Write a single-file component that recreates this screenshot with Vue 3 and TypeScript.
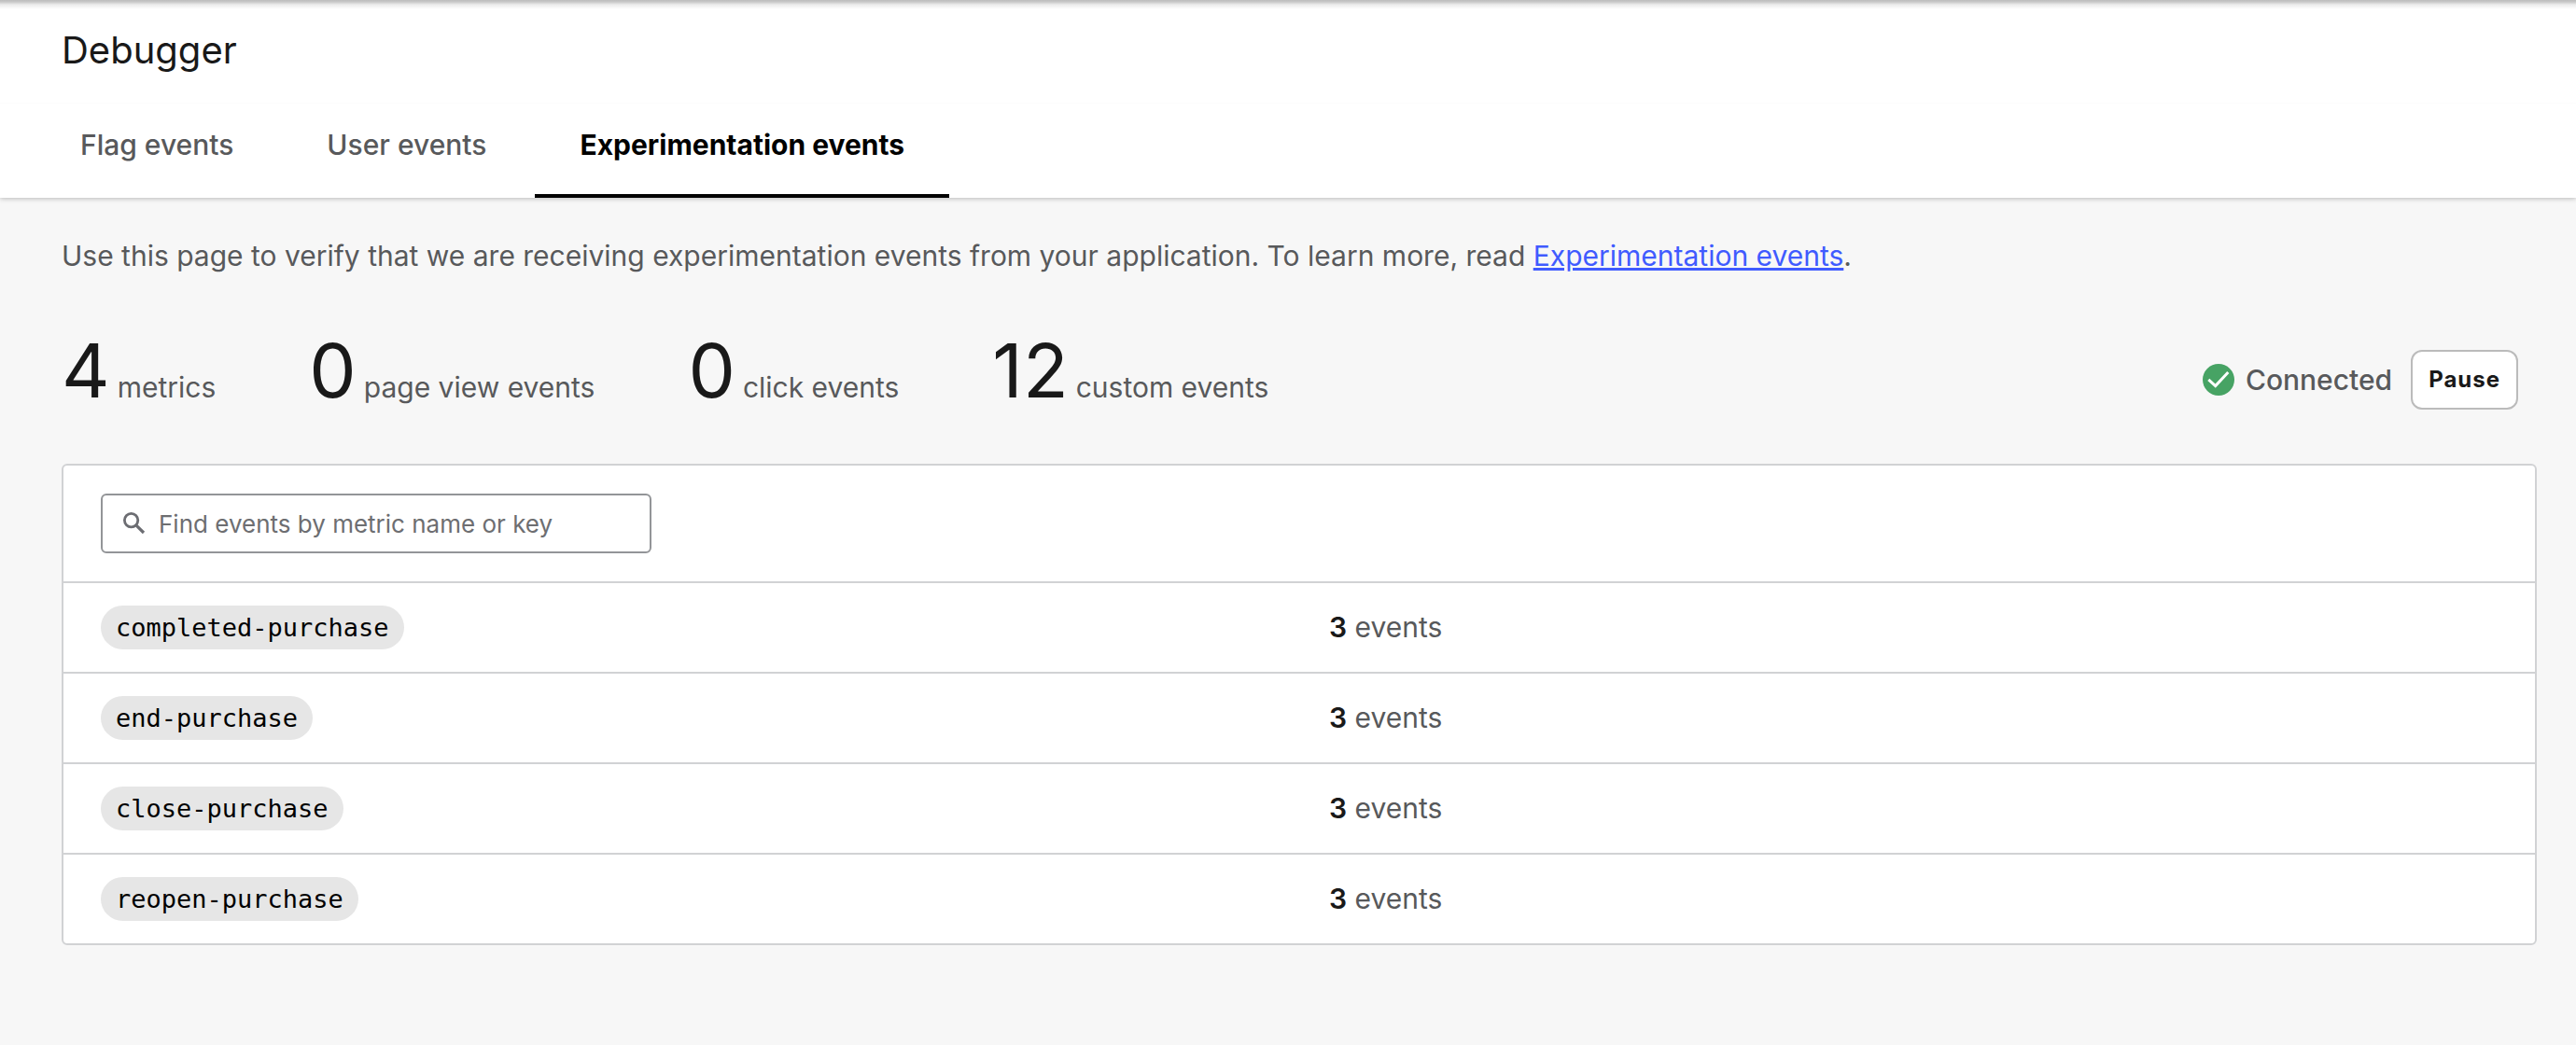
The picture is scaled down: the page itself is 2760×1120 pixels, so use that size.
<script setup lang="ts">
import { computed, ref } from 'vue'

interface Tab { id: string; label: string }
interface Stat { value: number; label: string }
interface Metric { key: string; events: number }

const tabs: Tab[] = [
  { id: 'flag', label: 'Flag events' },
  { id: 'user', label: 'User events' },
  { id: 'experimentation', label: 'Experimentation events' },
]
const activeTab = ref('experimentation')

const stats: Stat[] = [
  { value: 4, label: 'metrics' },
  { value: 0, label: 'page view events' },
  { value: 0, label: 'click events' },
  { value: 12, label: 'custom events' },
]

const metrics: Metric[] = [
  { key: 'completed-purchase', events: 3 },
  { key: 'end-purchase', events: 3 },
  { key: 'close-purchase', events: 3 },
  { key: 'reopen-purchase', events: 3 },
]

const query = ref('')
const visibleMetrics = computed(() =>
  metrics.filter((m) => m.key.includes(query.value.trim().toLowerCase())),
)
</script>

<template>
  <div class="page">
    <header class="header">
      <h1 class="title">Debugger</h1>
      <nav class="tabs" aria-label="Debugger views">
        <a
          v-for="tab in tabs"
          :key="tab.id"
          href="#"
          class="tab"
          :class="{ active: tab.id === activeTab }"
          :aria-current="tab.id === activeTab ? 'page' : undefined"
          @click.prevent="activeTab = tab.id"
        >{{ tab.label }}</a>
      </nav>
    </header>

    <main class="content">
      <p class="intro">
        Use this page to verify that we are receiving experimentation events from your application. To learn more, read
        <a href="#" class="link">Experimentation events</a>.
      </p>

      <div class="summary">
        <ul class="stats">
          <li v-for="stat in stats" :key="stat.label" class="stat">
            <span class="value">{{ stat.value }}</span>
            <span>{{ stat.label }}</span>
          </li>
        </ul>
        <div class="status">
          <svg class="check" viewBox="0 0 34 34" aria-hidden="true">
            <circle cx="17" cy="17" r="17" fill="#47a364" />
            <path d="M6.3 16.8 13.7 23.6 27.3 9" fill="none" stroke="#fff" stroke-width="3" />
          </svg>
          <span class="connected">Connected</span>
          <button type="button" class="pause">Pause</button>
        </div>
      </div>

      <section class="card">
        <div class="toolbar">
          <label class="search">
            <svg class="glass" viewBox="0 0 24 24" fill="none" stroke="#6c6d72" aria-hidden="true">
              <circle cx="8.6" cy="8.6" r="7.2" stroke-width="2.8" />
              <path d="M13.8 13.8 22 22" stroke-width="3.2" />
            </svg>
            <input
              v-model="query"
              type="text"
              class="field"
              placeholder="Find events by metric name or key"
              aria-label="Find events by metric name or key"
            />
          </label>
        </div>
        <table class="metrics">
          <tbody>
            <tr v-for="metric in visibleMetrics" :key="metric.key">
              <td><code class="chip">{{ metric.key }}</code></td>
              <td><strong class="count">{{ metric.events }}</strong> events</td>
            </tr>
          </tbody>
        </table>
      </section>
    </main>
  </div>
</template>

<style>
body {
  background: #f7f7f7;
}
</style>

<style scoped>
.page {
  min-height: 100vh;
  background: #f7f7f7;
  color: #58595b;
  font-family: Inter, "Liberation Sans", sans-serif;
  font-size: 30px;
  line-height: 40px;
}

.header {
  background: linear-gradient(#bdbdbd, #c8c8c8 2px, #ececec 5px, #fff 10px);
  box-shadow: 0 1px 5px rgba(0, 0, 0, 0.25);
}

.title {
  margin: 0;
  padding: 30px 66px 32px;
  color: #191919;
  font-size: 40px;
  font-weight: 400;
  line-height: 48px;
  border-bottom: 1px solid #fcfcfc;
}

.tabs {
  display: flex;
  gap: 4px;
  padding-left: 38px;
}

.tab {
  padding: 24px 48px 33px;
  border-bottom: 4px solid transparent;
  color: #58595b;
  font-weight: 500;
  text-decoration: none;
}

.tab.active {
  border-color: #000;
  color: #000;
  font-weight: 700;
}

.content {
  padding: 42px 42px 106px 66px;
}

.intro {
  margin: 0;
}

.link {
  color: #405bff;
  text-decoration: underline;
  text-decoration-thickness: 3px;
}

.summary {
  display: flex;
  align-items: flex-end;
  justify-content: space-between;
  margin: 55px 20px 52px 0;
}

.stats {
  display: flex;
  gap: 100px;
  margin: 0;
  padding: 0;
  list-style: none;
}

.stat {
  display: flex;
  align-items: baseline;
  gap: 8px;
}

.value {
  color: #191919;
  font-size: 80px;
  font-feature-settings: "calt" 0, "kern" 0;
  line-height: 96px;
}

.status {
  display: flex;
  align-items: center;
  padding-bottom: 6px;
}

.check {
  width: 34px;
  height: 34px;
}

.connected {
  margin: 0 20px 0 12px;
  font-weight: 500;
}

.pause {
  height: 64px;
  padding: 0 17px;
  border: 2px solid #bbb;
  border-radius: 12px;
  background: #fff;
  color: #191919;
  font: 700 24px/32px Inter, "Liberation Sans", sans-serif;
  letter-spacing: 1px;
}

.card {
  border: 2px solid #d1d2d4;
  border-radius: 6px;
  background: #fff;
}

.toolbar {
  padding: 30px 40px;
}

.search {
  display: flex;
  align-items: center;
  gap: 14px;
  box-sizing: border-box;
  width: 590px;
  max-width: 100%;
  height: 64px;
  padding: 0 22px;
  border: 2px solid #939598;
  border-radius: 6px;
}

.glass {
  flex: none;
  width: 24px;
  height: 24px;
}

.field {
  flex: 1;
  min-width: 0;
  padding: 2px 0 0;
  border: 0;
  outline: 0;
  background: none;
  color: #191919;
  font: 400 26px/32px Inter, "Liberation Sans", sans-serif;
}

.field::placeholder {
  color: #6d6e71;
  opacity: 1;
}

.metrics {
  width: 100%;
  border-collapse: separate;
  border-spacing: 0;
  table-layout: fixed;
}

.metrics td {
  box-sizing: border-box;
  height: 97px;
  padding: 0 0 2px 32px;
  border-top: 2px solid #d1d2d4;
  vertical-align: middle;
}

.metrics td:first-child {
  padding: 0 0 0 40px;
}

.chip {
  display: block;
  width: fit-content;
  padding: 0 16px;
  border-radius: 24px;
  background: #e6e6e6;
  color: #000;
  font: 27px/47px "DejaVu Sans Mono", monospace;
}

.count {
  color: #191919;
  font-weight: 600;
}
</style>
